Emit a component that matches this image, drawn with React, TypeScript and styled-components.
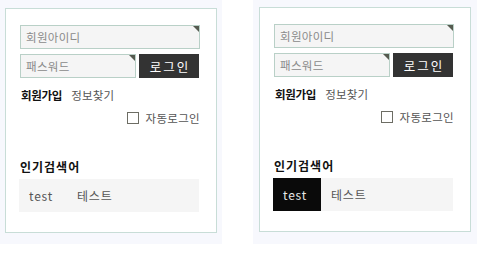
import React from "react";
import styled, { createGlobalStyle } from "styled-components";

const Global = createGlobalStyle`
  html, body { margin: 0; padding: 0; background: #ffffff; }
  body { font-family: "Noto Sans CJK KR", "Noto Sans", sans-serif; font-size: 12px; color: #222; }
  * { box-sizing: border-box; }
`;

const Page = styled.div`
  display: flex;
  align-items: flex-start;
  gap: 31px;
`;

const Shade = styled.div<{ $pt: number; $px: number; $pb: number }>`
  background: #f7f8fd;
  padding: ${(p) => p.$pt}px ${(p) => p.$px}px ${(p) => p.$pb}px;
`;

const Box = styled.div`
  width: 212px;
  height: 225px;
  background: #ffffff;
  border: 1px solid #c8ddd7;
  padding: 16px 16px 0 14px;
  display: flex;
  flex-direction: column;
`;

const Field = styled.div<{ $w: number }>`
  position: relative;
  width: ${(p) => p.$w}px;
  height: 24px;
  background: #f5f5f5;
  border: 1px solid #b9d0c7;
  display: flex;
  align-items: center;
  padding-left: 5px;
  color: #8a8a8a;
  font-size: 11.5px;
  letter-spacing: 0.3px;
  &::after {
    content: "";
    position: absolute;
    top: 0;
    right: 0;
    border-style: solid;
    border-width: 0 6px 6px 0;
    border-color: transparent #555a4f transparent transparent;
  }
`;

const Row = styled.div<{ $mt?: number }>`
  display: flex;
  gap: 3px;
  margin-top: ${(p) => p.$mt ?? 0}px;
`;

const LoginButton = styled.div`
  width: 60px;
  height: 24px;
  background: #333333;
  color: #ffffff;
  font-size: 12.5px;
  letter-spacing: 2px;
  display: flex;
  align-items: center;
  justify-content: center;
  padding-left: 2px;
`;

const Links = styled.div`
  display: flex;
  gap: 9px;
  margin-top: 9px;
  padding-left: 1px;
  line-height: 16px;
  font-size: 11.5px;
`;

const LinkText = styled.span<{ $bold?: boolean }>`
  font-weight: ${(p) => (p.$bold ? 700 : 400)};
  color: ${(p) => (p.$bold ? "#111" : "#555")};
  letter-spacing: ${(p) => (p.$bold ? "-0.3px" : "0.2px")};
`;

const AutoRow = styled.div`
  display: flex;
  justify-content: flex-end;
  align-items: center;
  gap: 7px;
  margin-top: 7px;
  line-height: 16px;
  color: #555;
  font-size: 11.5px;
  letter-spacing: 0.3px;
`;

const Check = styled.span`
  width: 12px;
  height: 12px;
  border: 1px solid #6d6d64;
  background: #fff;
`;

const Title = styled.div`
  margin-top: 33px;
  line-height: 16px;
  font-weight: 700;
  font-size: 12px;
  letter-spacing: 1px;
  color: #111;
`;

const Tags = styled.div`
  margin-top: 4px;
  margin-left: -1px;
  width: 180px;
  height: 33px;
  background: #f5f5f5;
  display: flex;
`;

const Tag = styled.div<{ $active?: boolean }>`
  padding: 0 10px;
  min-width: 48px;
  display: flex;
  align-items: center;
  font-size: 12px;
  letter-spacing: 0.8px;
  background: ${(p) => (p.$active ? "#0a0a0a" : "transparent")};
  color: ${(p) => (p.$active ? "#e8e8e8" : "#555")};
`;

function Panel({ active }: { active: boolean }) {
  return (
    <Box>
      <Field $w={180}>회원아이디</Field>
      <Row $mt={5}>
        <Field $w={116}>패스워드</Field>
        <LoginButton>로그인</LoginButton>
      </Row>
      <Links>
        <LinkText $bold>회원가입</LinkText>
        <LinkText>정보찾기</LinkText>
      </Links>
      <AutoRow>
        <Check />
        <span>자동로그인</span>
      </AutoRow>
      <Title>인기검색어</Title>
      <Tags>
        <Tag $active={active}>test</Tag>
        <Tag>테스트</Tag>
      </Tags>
    </Box>
  );
}

export default function App() {
  return (
    <>
      <Global />
      <Page>
        <Shade $pt={8} $px={5} $pb={11}>
          <Panel active={false} />
        </Shade>
        <Shade $pt={7} $px={6} $pb={12}>
          <Panel active={true} />
        </Shade>
      </Page>
    </>
  );
}
